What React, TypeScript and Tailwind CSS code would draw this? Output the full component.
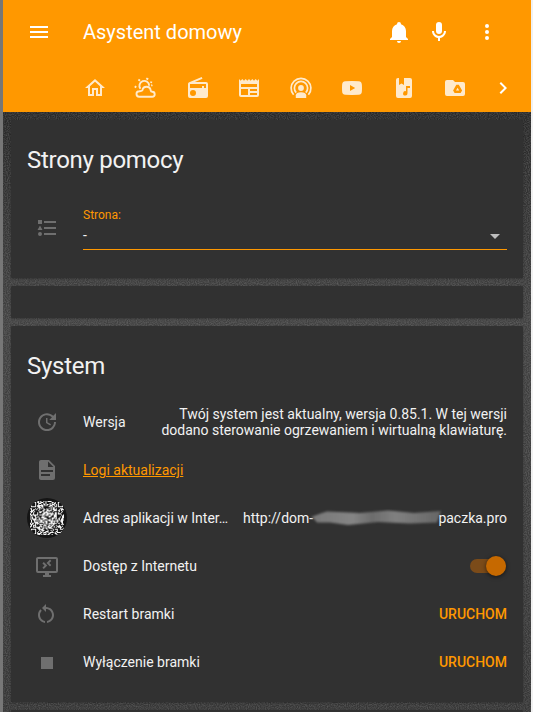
import React from "react";

function Icon({ d, className = "" }: { d: string; className?: string }) {
  return (
    <svg viewBox="0 0 24 24" className={`h-6 w-6 shrink-0 fill-current ${className}`}>
      <path fillRule="evenodd" d={d} />
    </svg>
  );
}

const icons = {
  menu: "M3,6H21V8H3V6M3,11H21V13H3V11M3,16H21V18H3V16Z",
  bell: "M21,19V20H3V19L5,17V11C5,7.9 7.03,5.17 10,4.29V4A2,2 0 0,1 14,4V4.29C16.97,5.17 19,7.9 19,11V17L21,19M14,21A2,2 0 0,1 10,21",
  mic: "M12,2A3,3 0 0,1 15,5V11A3,3 0 0,1 9,11V5A3,3 0 0,1 12,2M19,11C19,14.53 16.39,17.44 13,17.93V21H11V17.93C7.61,17.44 5,14.53 5,11H7A5,5 0 0,0 17,11H19Z",
  dots: "M12,16A2,2 0 0,1 12,20A2,2 0 0,1 12,16M12,10A2,2 0 0,1 12,14A2,2 0 0,1 12,10M12,4A2,2 0 0,1 12,8A2,2 0 0,1 12,4Z",
  home: "M12 5.69L17 10.19V18H15V12H9V18H7V10.19L12 5.69M12 3L2 12H5V20H11V14H13V20H19V12H22",
  radio: "M20,6A2,2 0 0,1 22,8V20A2,2 0 0,1 20,22H4A2,2 0 0,1 2,20V8C2,7.15 2.53,6.42 3.28,6.13L15.71,1L16.47,2.83L8.83,6H20M20,8H4V12H16V10H18V12H20V8M7,14A3,3 0 0,0 7,20A3,3 0 0,0 7,14Z",
  news: "M20,11H4V8H20M20,15H13V13H20M20,19H13V17H20M11,19H4V13H11M20.33,4.67L18.67,3L17,4.67L15.33,3L13.67,4.67L12,3L10.33,4.67L8.67,3L7,4.67L5.33,3L3.67,4.67L2,3V19A2,2 0 0,0 4,21H20A2,2 0 0,0 22,19V3L20.33,4.67Z",
  youtube: "M10,15L15.2,12L10,9V15M12,5L18.5,5.2C21,5.3 21.8,6.5 21.9,9L22,12L21.9,15C21.8,17.5 21,18.7 18.5,18.8L12,19L5.5,18.8C3,18.7 2.2,17.5 2.1,15L2,12L2.1,9C2.2,6.5 3,5.3 5.5,5.2L12,5Z",
  book: "M6,2H7V9L9.5,7.5L12,9V2H18A2,2 0 0,1 20,4V20A2,2 0 0,1 18,22H6A2,2 0 0,1 4,20V4A2,2 0 0,1 6,2M14,10V15.3A2.2,2.2 0 1,0 15.5,17.3V12H18V10H14Z",
  drive: "M20,6A2,2 0 0,1 22,8V18A2,2 0 0,1 20,20H4A2,2 0 0,1 2,18V6A2,2 0 0,1 4,4H10L12,6H20M13.3,8.8L10.1,14.6L11.6,17.1H17.6L19.1,14.6L15.8,8.8H13.3M14.6,11.8L16.2,14.6H13L14.6,11.8Z",
  chevron: "M8.59,16.58L13.17,12L8.59,7.41L10,6L16,12L10,18L8.59,16.58Z",
  list: "M5,9.5L7.5,14H2.5L5,9.5M3,4H7V8H3V4M5,20A2,2 0 0,0 5,16A2,2 0 0,0 5,20M9,5V7H21V5H9M9,19H21V17H9V19M9,13H21V11H9V13Z",
  update: "M21,10.12H14.22L16.96,7.3C14.23,4.6 9.81,4.5 7.08,7.2C4.35,9.91 4.35,14.28 7.08,17C9.81,19.7 14.23,19.7 16.96,17C18.32,15.65 19,14.08 19,12.1H21C21,14.08 20.12,16.65 18.36,18.39C14.85,21.87 9.15,21.87 5.64,18.39C2.14,14.92 2.11,9.28 5.62,5.81C9.13,2.34 14.76,2.34 18.27,5.81L21,3V10.12M12.5,8V12.25L16,14.33L15.28,15.54L11,13V8H12.5Z",
  file: "M13,9H18.5L13,3.5V9M6,2H14L20,8V20A2,2 0 0,1 18,22H6C4.89,22 4,21.1 4,20V4C4,2.89 4.89,2 6,2M15,18V16H6V18H15M18,14V12H6V14H18Z",
  remote: "M21,3H3C1.9,3 1,3.9 1,5V17A2,2 0 0,0 3,19H10V21H8V23H16V21H14V19H21A2,2 0 0,0 23,17V5A2,2 0 0,0 21,3M21,17H3V5H21V17M15,5.5L16.3,6.9L14.2,8.9L16.3,11L15,12.4L11.5,8.9L15,5.5M8.8,8.1L12.3,11.6L8.8,15.1L7.4,13.7L9.5,11.6L7.4,9.5L8.8,8.1Z",
  restart: "M11,5V2L7,6L11,10V7C14.31,7 17,9.69 17,13C17,15.97 14.83,18.43 12,18.91V20.93C15.95,20.44 19,17.08 19,13C19,8.58 15.42,5 11,5M5,13C5,11.35 5.67,9.85 6.76,8.76L5.34,7.34C3.9,8.79 3,10.79 3,13C3,17.08 6.05,20.44 10,20.93V18.91C7.17,18.43 5,15.97 5,13Z",
  stop: "M18,18H6V6H18V18Z",
};

function Weather() {
  return (
    <svg viewBox="0 0 24 24" className="h-6 w-6" fill="none" stroke="currentColor" strokeWidth="1.9">
      <path d="M5.2,20.7H18.2A2.5,2.5 0 0 0 18.2,15.7C17.2,15.7 16.9,15.4 16.7,14.3A4.2,4.2 0 0 0 8.4,14.3C8.2,15.1 7.2,15.1 5.2,15.3A2.7,2.7 0 0 0 5.2,20.7Z" />
      <path d="M6.4,12.8A4.9,4.9 0 1 1 15.2,9.7" />
      <path d="M4.4,3.6L6,4.8M12.3,2.2L14.2,3.4M17.4,5.6L17,7M0.8,10.2L2.2,11.5M17.2,9.7L18.4,9.2" />
    </svg>
  );
}

function Podcast() {
  return (
    <svg viewBox="0 0 24 24" className="h-6 w-6" fill="none" stroke="currentColor" strokeWidth="1.7">
      <path d="M4.6,18.8A9.9,9.9 0 1 1 19.4,18.8" />
      <path d="M7.2,16.6A6.6,6.6 0 1 1 16.8,16.6" />
      <circle cx="12" cy="12" r="2.9" fill="currentColor" stroke="none" />
      <path d="M6.8,22V19.2C6.8,17.3 9,16.2 12,16.2S17.2,17.3 17.2,19.2V22Z" fill="currentColor" stroke="none" />
    </svg>
  );
}

function qrPath() {
  let seed = 71;
  let d = "";
  const n = 33;
  const finder = (x: number, y: number) => {
    const a = Math.max(Math.abs(x - 3), Math.abs(y - 3));
    return a === 3 || a < 2;
  };
  for (let y = 0; y < n; y++) {
    for (let x = 0; x < n; x++) {
      seed = (seed * 16807) % 2147483647;
      let dark = seed % 100 < 49;
      if (x < 7 && y < 7) dark = finder(x, y);
      if (x > n - 8 && y < 7) dark = finder(n - 1 - x, y);
      if (x < 7 && y > n - 8) dark = finder(x, n - 1 - y);
      if (!dark) d += `M${x},${y}h1v1h-1z`;
    }
  }
  return d;
}

function QrBadge() {
  return (
    <div className="flex h-10 w-10 shrink-0 items-center justify-center overflow-hidden rounded-full bg-[#151515]">
      <svg viewBox="0 0 33 33" className="h-[34px] w-[34px] rounded-[9px]" fill="#f4f4f4">
        <path d={qrPath()} />
      </svg>
    </div>
  );
}

function Texture() {
  return (
    <svg className="absolute inset-0 h-full w-full" aria-hidden="true">
      <filter id="grain">
        <feTurbulence type="fractalNoise" baseFrequency="0.9" numOctaves="1" seed="4" />
        <feColorMatrix values="0 0 0 0 0.5  0 0 0 0 0.5  0 0 0 0 0.5  0.5 0 0 0 -0.17" />
      </filter>
      <rect width="100%" height="100%" filter="url(#grain)" />
    </svg>
  );
}

const card = "rounded-[2px] bg-[#313131] shadow-[0_1px_2px_rgba(0,0,0,0.2),0_0_1px_rgba(0,0,0,0.2)]";
const heading = "text-[24px] leading-10 tracking-[-0.012em]";

function Row({ icon, label, children }: { icon: React.ReactNode; label: React.ReactNode; children?: React.ReactNode }) {
  return (
    <div className="flex h-10 items-center">
      <div className="flex w-10 shrink-0 justify-center text-[#6f6f6f]">{icon}</div>
      <div className="ml-4 flex min-w-0 flex-1 items-center justify-between">
        <div className="whitespace-nowrap">{label}</div>
        {children}
      </div>
    </div>
  );
}

export default function App() {
  return (
    <div className="h-[712px] w-[533px] overflow-hidden border-r-2 border-[#f1f1f1] bg-[#777] pl-[3px] font-[Roboto,sans-serif] text-[14px] leading-5 text-[#f2f2f2]">
      <div className="relative h-full overflow-hidden bg-linear-to-b from-[#1c1c1c] via-[#414141] via-45% to-[#363636]">
        <Texture />
        <header className="relative h-28 bg-[#ff9800] text-white">
          <div className="flex h-16 items-center pr-8 pl-6">
            <Icon d={icons.menu} />
            <h1 className="ml-8 flex-1 text-[20px] leading-6">Asystent domowy</h1>
            <Icon d={icons.bell} />
            <Icon d={icons.mic} className="ml-4" />
            <Icon d={icons.dots} className="ml-6" />
          </div>
          <div className="flex h-12 items-center pr-4 pl-20">
            <div className="flex flex-1 gap-[27.44px] text-white/80">
              <Icon d={icons.home} />
              <Weather />
              <Icon d={icons.radio} />
              <Icon d={icons.news} />
              <Podcast />
              <Icon d={icons.youtube} />
              <Icon d={icons.book} />
              <Icon d={icons.drive} />
            </div>
            <Icon d={icons.chevron} />
          </div>
        </header>
        <main className="relative flex flex-col gap-2 p-2">
          <section className={`${card} h-[158px] px-4 pt-5`}>
            <h2 className={heading}>Strony pomocy</h2>
            <div className="mt-6 flex">
              <div className="flex w-10 shrink-0 justify-center pt-3 text-[#6f6f6f]"><Icon d={icons.list} /></div>
              <div className="ml-4 h-[46px] flex-1 border-b border-[#ff9800]">
                <div className="pt-[1px] text-[12px] leading-5 text-[#ff9800]">Strona:</div>
                <div className="flex items-center justify-between pr-[7px]">
                  <span>-</span>
                  <span className="mt-[3px] border-x-[5px] border-t-[5px] border-x-transparent border-t-[#bdbdbd]" />
                </div>
              </div>
            </div>
          </section>
          <section className={`${card} h-8`} />
          <section className={`${card} h-[376px] px-4 pt-5`}>
            <h2 className={heading}>System</h2>
            <div className="mt-4 flex flex-col gap-2">
              <Row icon={<Icon d={icons.update} />} label="Wersja">
                <div className="text-right leading-4">
                  Twój system jest aktualny, wersja 0.85.1. W tej wersji
                  <br />
                  dodano sterowanie ogrzewaniem i wirtualną klawiaturę.
                </div>
              </Row>
              <Row icon={<Icon d={icons.file} />} label={<span className="text-[#ff9800] underline">Logi aktualizacji</span>} />
              <Row icon={<QrBadge />} label="Adres aplikacji w Inter…">
                <div className="flex w-[264px] shrink-0 items-center justify-between">
                  <span>http://dom-</span>
                  <svg viewBox="0 0 132 20" className="-mx-1 h-5 w-[132px]">
                    <defs>
                      <filter id="soft"><feGaussianBlur stdDeviation="0.9" /></filter>
                      <linearGradient id="smear">
                        <stop stopColor="#777" />
                        <stop offset=".32" stopColor="#858585" />
                        <stop offset=".47" stopColor="#6c6c6c" />
                        <stop offset=".65" stopColor="#808080" />
                        <stop offset="1" stopColor="#666" />
                      </linearGradient>
                    </defs>
                    <path filter="url(#soft)" fill="url(#smear)" d="M1,9L12,5L17,3.5L50,5L78,2.5L104,5L131,3L127,14.5L100,15.5L68,14L38,17L20,14.5L7,14.5L4,11Z" />
                  </svg>
                  <span>paczka.pro</span>
                </div>
              </Row>
              <Row icon={<Icon d={icons.remote} />} label="Dostęp z Internetu">
                <div className="mr-[1px] flex h-[14px] w-9 items-center justify-end rounded-full bg-[#7b4b19]">
                  <div className="h-5 w-5 shrink-0 rounded-full bg-[#c66900] shadow-[0_1px_4px_rgba(0,0,0,0.6)]" />
                </div>
              </Row>
              <Row icon={<Icon d={icons.restart} />} label="Restart bramki">
                <span className="font-medium text-[#ff9800]">URUCHOM</span>
              </Row>
              <Row icon={<Icon d={icons.stop} className="mt-[2px]" />} label="Wyłączenie bramki">
                <span className="font-medium text-[#ff9800]">URUCHOM</span>
              </Row>
            </div>
          </section>
          <section className={`${card} h-8`} />
        </main>
      </div>
    </div>
  );
}
